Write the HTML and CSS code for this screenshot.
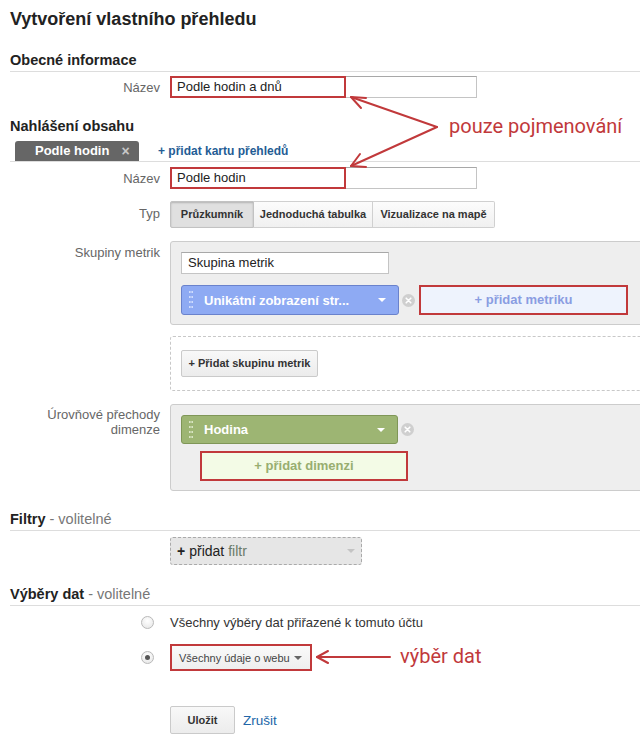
FILE: index.html
```html
<!DOCTYPE html>
<html lang="cs">
<head>
<meta charset="utf-8">
<title>Vytvoření vlastního přehledu</title>
<link rel="stylesheet" href="styles.css">
</head>
<body>
<div class="page">
  <h1 class="title">Vytvoření vlastního přehledu</h1>

  <h2 class="sec sec-general">Obecné informace</h2>
  <div class="row row-name1">
    <span class="lbl">Název</span>
    <div class="field">
      <div class="input">Podle hodin a dnů</div>
      <span class="hl"></span>
    </div>
  </div>

  <h2 class="sec-plain">Nahlášení obsahu</h2>
  <div class="tabs">
    <span class="tab">Podle hodin <span class="tab-x">×</span></span>
    <a class="add-tab">+ přidat kartu přehledů</a>
  </div>

  <div class="row row-name2">
    <span class="lbl">Název</span>
    <div class="field">
      <div class="input">Podle hodin</div>
      <span class="hl"></span>
    </div>
  </div>

  <div class="row row-type">
    <span class="lbl lbl-type">Typ</span>
    <div class="seg">
      <span class="seg-btn active">Průzkumník</span>
      <span class="seg-btn">Jednoduchá tabulka</span>
      <span class="seg-btn">Vizualizace na mapě</span>
    </div>
  </div>

  <div class="row row-top row-metrics">
    <span class="lbl lbl-box">Skupiny metrik</span>
    <div class="box box-metrics">
      <div class="input input-group">Skupina metrik</div>
      <div class="pill-row">
        <div class="pill pill-blue">
          <svg class="grip" width="4" height="18" viewBox="0 0 4 18"><g fill="#dfe8ff"><circle cx="0.8" cy="1" r="0.9"/><circle cx="3.2" cy="1" r="0.9"/><circle cx="0.8" cy="6" r="0.9"/><circle cx="3.2" cy="6" r="0.9"/><circle cx="0.8" cy="11" r="0.9"/><circle cx="3.2" cy="11" r="0.9"/><circle cx="0.8" cy="16" r="0.9"/><circle cx="3.2" cy="16" r="0.9"/></g></svg>
          <span class="pill-text">Unikátní zobrazení str...</span>
          <span class="caret caret-white"></span>
        </div>
        <svg class="rm" width="13" height="13" viewBox="0 0 13 13"><circle cx="6.5" cy="6.5" r="6.5" fill="#cfcfcf"/><path d="M4.2 4.2 L8.8 8.8 M8.8 4.2 L4.2 8.8" stroke="#fff" stroke-width="1.6" stroke-linecap="round"/></svg>
        <div class="add-box add-metric">+ přidat metriku</div>
      </div>
    </div>
  </div>

  <div class="row row-top row-addgroup">
    <span class="lbl"></span>
    <div class="dashed">
      <span class="btn btn-group">+ Přidat skupinu metrik</span>
    </div>
  </div>

  <div class="row row-top row-dims">
    <span class="lbl lbl-dim">Úrovňové přechody<br>dimenze</span>
    <div class="box box-dims">
      <div class="pill-row">
        <div class="pill pill-green">
          <svg class="grip" width="4" height="18" viewBox="0 0 4 18"><g fill="#e6efd6"><circle cx="0.8" cy="1" r="0.9"/><circle cx="3.2" cy="1" r="0.9"/><circle cx="0.8" cy="6" r="0.9"/><circle cx="3.2" cy="6" r="0.9"/><circle cx="0.8" cy="11" r="0.9"/><circle cx="3.2" cy="11" r="0.9"/><circle cx="0.8" cy="16" r="0.9"/><circle cx="3.2" cy="16" r="0.9"/></g></svg>
          <span class="pill-text">Hodina</span>
          <span class="caret caret-white"></span>
        </div>
        <svg class="rm" width="13" height="13" viewBox="0 0 13 13"><circle cx="6.5" cy="6.5" r="6.5" fill="#cfcfcf"/><path d="M4.2 4.2 L8.8 8.8 M8.8 4.2 L4.2 8.8" stroke="#fff" stroke-width="1.6" stroke-linecap="round"/></svg>
      </div>
      <div class="add-box add-dim">+ přidat dimenzi</div>
    </div>
  </div>

  <h2 class="sec sec-filters">Filtry <span class="opt">- volitelné</span></h2>
  <div class="row row-filter">
    <span class="lbl"></span>
    <div class="filter-btn"><span class="plus">+</span> přidat <span class="filtr">filtr</span><span class="caret caret-light"></span></div>
  </div>

  <h2 class="sec sec-views">Výběry dat <span class="opt">- volitelné</span></h2>
  <div class="row row-radio1">
    <span class="lbl lbl-radio"><span class="radio"></span></span>
    <span class="radio-text">Všechny výběry dat přiřazené k tomuto účtu</span>
  </div>
  <div class="row row-radio2">
    <span class="lbl lbl-radio"><span class="radio checked"></span></span>
    <div class="select">Všechny údaje o webu <span class="caret caret-dark"></span></div>
  </div>

  <div class="row row-actions">
    <span class="lbl"></span>
    <div class="actions">
      <span class="btn btn-save">Uložit</span>
      <a class="cancel">Zrušit</a>
    </div>
  </div>

  <span class="note note-name">pouze pojmenování</span>
  <span class="note note-view">výběr dat</span>
  <svg class="annot" width="640" height="742" viewBox="0 0 640 742">
    <g fill="none" stroke="#c1393b" stroke-width="2" stroke-linecap="round" stroke-linejoin="round">
      <path d="M437 127 L351 97"/>
      <path d="M366 98 L351 97 L361 108"/>
      <path d="M437 127 L351 166"/>
      <path d="M360 154 L351 166 L366 167"/>
      <path d="M390 657 L317 657"/>
      <path d="M328 651 L317 657 L328 663"/>
    </g>
  </svg>
</div>
</body>
</html>
```

FILE: styles.css
```css
html, body {
  margin: 0;
  padding: 0;
  background: #fff;
}
body {
  font-family: "Liberation Sans", Arial, sans-serif;
  font-size: 13px;
  color: #333;
  width: 640px;
  height: 742px;
  overflow: hidden;
}
.page {
  position: relative;
  width: 630px;
  height: 742px;
  padding-left: 10px;
  overflow: hidden;
}
.title {
  margin: 8px 0 0;
  font-size: 18px;
  line-height: 22px;
  font-weight: bold;
  color: #222;
}
.sec, .sec-plain {
  margin: 0;
  font-size: 14.5px;
  line-height: 18px;
  font-weight: bold;
  color: #222;
}
.sec {
  padding-bottom: 2px;
  border-bottom: 1px solid #ddd;
}
.sec .opt {
  font-weight: normal;
  color: #777;
}
.sec-general { margin-top: 21px; }
.sec-plain { margin-top: 19px; }
.sec-filters { margin-top: 19px; }
.sec-views { margin-top: 20px; }

.row {
  display: grid;
  grid-template-columns: 150px 1fr;
  column-gap: 10px;
  align-items: center;
}
.row-top { align-items: start; }
.lbl {
  text-align: right;
  color: #666;
  font-size: 13px;
  line-height: 15px;
}
.row-name1 { margin-top: 4px; }
.row-name2 { margin-top: 5px; }
.row-type { margin-top: 12px; }
.row-metrics { margin-top: 13px; }
.row-addgroup { margin-top: 11px; }
.row-dims { margin-top: 13px; }
.row-filter { margin-top: 6px; }
.row-radio1 { margin-top: 6px; height: 20px; }
.row-radio2 { margin-top: 12px; }
.row-actions { margin-top: 35px; }

.field {
  position: relative;
  width: 307px;
}
.input {
  box-sizing: border-box;
  height: 22px;
  width: 307px;
  border: 1px solid #c4c4c4;
  border-top-color: #a8a8a8;
  background: #fff;
  padding: 0 6px;
  font-size: 13px;
  line-height: 20px;
  color: #222;
}
.hl {
  position: absolute;
  left: 0;
  top: 0;
  width: 176px;
  height: 22px;
  box-sizing: border-box;
  border: 2px solid #c1393b;
}

.tabs {
  margin-top: 6px;
  height: 20px;
  border-bottom: 1px solid #ddd;
  display: flex;
  align-items: flex-end;
}
.tab {
  margin-left: 5px;
  box-sizing: border-box;
  width: 124px;
  height: 20px;
  background: #666;
  border-radius: 3px 3px 0 0;
  color: #fff;
  font-weight: bold;
  font-size: 13px;
  line-height: 20px;
  padding-left: 20px;
  display: flex;
}
.tab-x {
  margin-left: 12px;
  color: #c8c8c8;
  font-size: 14px;
}
.add-tab {
  margin-left: 19px;
  color: #245c94;
  font-weight: bold;
  font-size: 12px;
  line-height: 20px;
}

.lbl-type { position: relative; top: -1px; }
.seg {
  display: flex;
  height: 27px;
  width: max-content;
}
.seg-btn {
  box-sizing: border-box;
  height: 27px;
  line-height: 25px;
  font-size: 11px;
  font-weight: bold;
  color: #333;
  border: 1px solid #d0d0d0;
  border-left-width: 0;
  background: linear-gradient(#fcfcfc, #f0f0f0);
  padding: 0 8px;
}
.seg-btn:first-child {
  border-left-width: 1px;
  border-radius: 2px 0 0 2px;
  width: 84px;
  text-align: center;
  padding: 0;
}
.seg-btn:last-child { border-radius: 0 2px 2px 0; width: 122px; text-align: center; padding: 0; }
.seg-btn:nth-child(2) { width: 119px; text-align: center; padding: 0; }
.seg-btn.active {
  background: #e0e0e0;
  box-shadow: inset 0 1px 2px rgba(0,0,0,0.2);
  border-color: #c2c2c2;
}

.lbl-box { padding-top: 4px; }
.lbl-dim { padding-top: 3px; }
.box {
  box-sizing: border-box;
  width: 480px;
  background: #eee;
  border: 1px solid #ccc;
  border-radius: 3px;
  padding: 10px 10px 9px;
}
.box-metrics { height: 84px; }
.box-dims { height: 87px; }
.input-group { width: 208px; }
.pill-row {
  display: flex;
  align-items: center;
}
.box-metrics .pill-row { margin-top: 11px; }
.pill {
  box-sizing: border-box;
  display: flex;
  align-items: center;
  width: 218px;
  border-radius: 3px;
  padding: 0 12px 0 7px;
  color: #fff;
  font-weight: bold;
  font-size: 13px;
}
.pill-blue {
  height: 30px;
  background: #8eaaf3;
  border: 1px solid #6a82cc;
}
.pill-green {
  height: 29px;
  width: 217px;
  background: #9db573;
  border: 1px solid #7f9657;
}
.grip { flex: none; }
.pill-text {
  margin-left: 11px;
  flex: 1;
  white-space: nowrap;
}
.caret {
  display: inline-block;
  width: 0;
  height: 0;
  border-left: 4px solid transparent;
  border-right: 4px solid transparent;
  border-top: 4px solid #fff;
}
.caret-white { border-top-color: #fff; }
.rm {
  flex: none;
  margin-left: 3px;
}
.add-box {
  box-sizing: border-box;
  height: 30px;
  border: 2px solid #c1393b;
  text-align: center;
  font-weight: bold;
  font-size: 13px;
  line-height: 26px;
}
.add-metric {
  margin-left: 4px;
  width: 209px;
  background: #eef3fd;
  color: #8a9de2;
}
.add-dim {
  margin-top: 7px;
  margin-left: 19px;
  width: 208px;
  background: #f3fbe6;
  color: #98ae70;
}

.dashed {
  box-sizing: border-box;
  width: 480px;
  height: 55px;
  border: 1px dashed #c8c8c8;
  border-radius: 3px;
  padding: 13px 10px;
}
.btn {
  display: inline-block;
  box-sizing: border-box;
  height: 27px;
  line-height: 25px;
  border: 1px solid #cacaca;
  border-radius: 2px;
  background: linear-gradient(#f8f8f8, #ececec);
  font-size: 11px;
  font-weight: bold;
  color: #333;
  text-align: center;
}
.btn-group { width: 137px; }

.filter-btn {
  box-sizing: border-box;
  width: 192px;
  height: 28px;
  border: 1px dashed #aaa;
  border-radius: 3px;
  background: #e6e6e6;
  font-size: 14px;
  line-height: 26px;
  color: #222;
  padding-left: 6px;
  display: flex;
  align-items: center;
}
.filter-btn .plus { font-weight: bold; margin-right: 4px; }
.filter-btn .filtr { color: #6a7a6a; margin-left: 4px; flex: 1; }
.caret-light { border-top-color: #c4c4c4; margin-right: 6px; }

.lbl-radio {
  display: flex;
  justify-content: flex-end;
  padding-right: 6px;
}
.radio {
  box-sizing: border-box;
  width: 13px;
  height: 13px;
  border-radius: 50%;
  border: 1px solid #b9b9b9;
  background: radial-gradient(circle at 50% 35%, #fff, #e4e4e4);
  display: flex;
  align-items: center;
  justify-content: center;
}
.radio.checked::after {
  content: "";
  width: 5px;
  height: 5px;
  border-radius: 50%;
  background: #555;
}
.radio-text {
  font-size: 13px;
  color: #333;
}
.select {
  box-sizing: border-box;
  width: 142px;
  height: 27px;
  border: 2px solid #c1393b;
  background: linear-gradient(#fafafa, #eeeeee);
  font-size: 11px;
  color: #444;
  padding: 0 8px 0 7px;
  display: flex;
  align-items: center;
  justify-content: space-between;
}
.caret-dark { border-top-color: #666; }

.actions {
  display: flex;
  align-items: center;
}
.btn-save {
  width: 65px;
  height: 28px;
  line-height: 26px;
}
.cancel {
  margin-left: 8px;
  font-size: 13.5px;
  color: #2166a8;
}

.note {
  position: absolute;
  font-family: Roboto, "Noto Sans", sans-serif;
  font-size: 20px;
  line-height: 24px;
  color: #c1393b;
  white-space: nowrap;
}
.note-name { left: 449px; top: 114px; }
.note-view { left: 400px; top: 644px; }
.annot {
  position: absolute;
  left: 0;
  top: 0;
  pointer-events: none;
}
```
